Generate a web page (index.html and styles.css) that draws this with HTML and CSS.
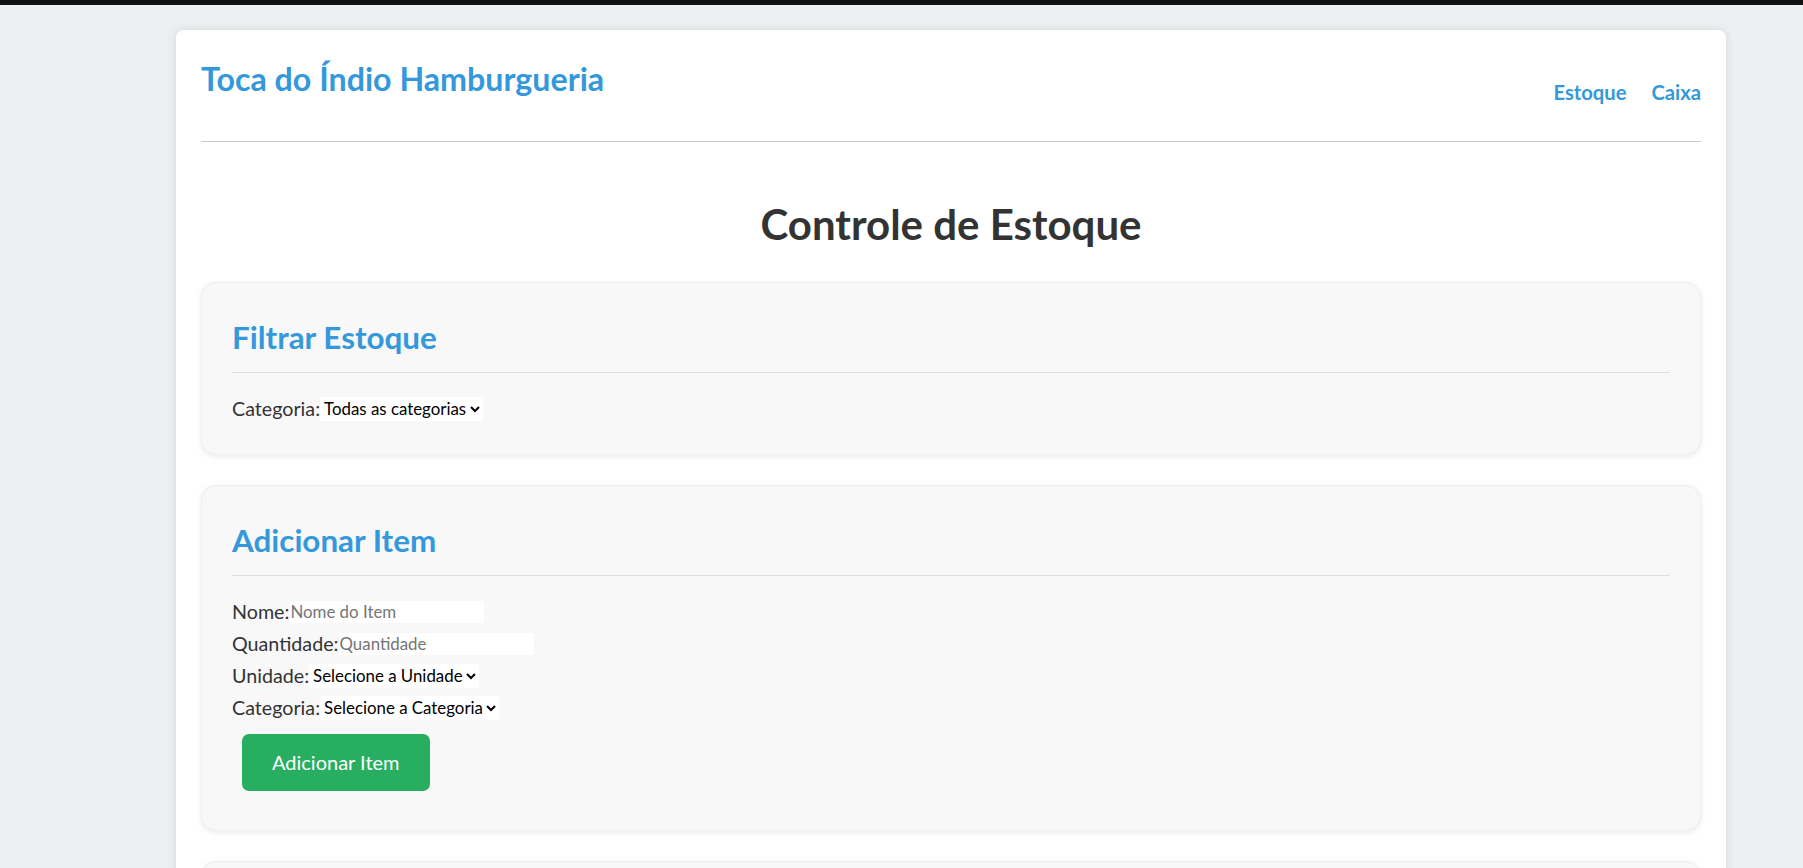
FILE: index.html
```html
<!DOCTYPE html>
<html lang="pt-BR">
<head>
<meta charset="utf-8">
<title>Toca do Índio Hamburgueria - Estoque</title>
<link rel="stylesheet" href="styles.css">
</head>
<body>
<div class="topbar"></div>
<div class="container">
  <header class="site-header">
    <h1 class="brand">Toca do Índio Hamburgueria</h1>
    <nav class="nav">
      <a href="#" class="nav-link">Estoque</a>
      <a href="#" class="nav-link">Caixa</a>
    </nav>
  </header>
  <main>
    <h2 class="page-title">Controle de Estoque</h2>
    <section class="panel">
      <h3 class="panel-title">Filtrar Estoque</h3>
      <div class="form-row">
        <label class="field-label" for="filtro">Categoria:</label><select id="filtro" class="field-select"><option>Todas as categorias</option></select>
      </div>
    </section>
    <section class="panel">
      <h3 class="panel-title">Adicionar Item</h3>
      <form class="item-form">
        <div class="form-row"><label class="field-label" for="nome">Nome:</label><input id="nome" class="field-input" type="text" placeholder="Nome do Item"></div>
        <div class="form-row"><label class="field-label" for="qtd">Quantidade:</label><input id="qtd" class="field-input" type="number" placeholder="Quantidade"></div>
        <div class="form-row"><label class="field-label" for="uni">Unidade:</label><select id="uni" class="field-select"><option>Selecione a Unidade</option></select></div>
        <div class="form-row"><label class="field-label" for="cat">Categoria:</label><select id="cat" class="field-select"><option>Selecione a Categoria</option></select></div>
        <button type="button" class="btn-add">Adicionar Item</button>
      </form>
    </section>
    <section class="panel">
      <h3 class="panel-title">Itens em Estoque</h3>
    </section>
  </main>
</div>
</body>
</html>
```
FILE: styles.css
```css
* { box-sizing: border-box; }
body {
  margin: 0;
  background: #ecf0f1;
  font-family: Lato, "Open Sans", sans-serif;
  color: #333;
}
.topbar { height: 5px; background: #111; }
.container {
  width: 1550px;
  margin: 25px 0 0 176px;
  padding: 0 25px 25px;
  background: #fff;
  border-radius: 8px;
  box-shadow: 0 0 10px rgba(0,0,0,0.1);
}
.site-header {
  display: flex;
  justify-content: space-between;
  align-items: flex-start;
  height: 112px;
  border-bottom: 1px solid #c8c8c8;
}
.brand {
  margin: 32.6px 0 0;
  font-size: 32.2px;
  line-height: 1;
  font-weight: 700;
  color: #3498db;
}
.nav { display: flex; gap: 25px; margin-top: 52.3px; }
.nav-link {
  font-size: 20.2px;
  line-height: 1;
  font-weight: 700;
  color: #3498db;
  text-decoration: none;
}
.page-title {
  margin: 61.4px 0 36.6px;
  text-align: center;
  font-size: 42px;
  line-height: 1;
  font-weight: 700;
  color: #333;
}
.panel {
  margin-bottom: 30px;
  padding: 30px 30px 29px;
  background: #f8f8f8;
  border: 1px solid #eee;
  border-radius: 15px;
  box-shadow: 0 2px 6px rgba(0,0,0,0.08);
}
.panel-title {
  margin: 9px 0 20px;
  padding-bottom: 18.6px;
  border-bottom: 1px solid #ddd;
  font-size: 31.4px;
  line-height: 1;
  font-weight: 700;
  color: #3498db;
}
.item-form { display: flex; flex-direction: column; align-items: flex-start; }
.form-row { display: flex; align-items: center; height: 32px; }
.field-label { font-size: 19.7px; color: #333; }
.field-input {
  width: 195px;
  height: 22px;
  padding: 0 1px;
  border: none;
  background: #fff;
  font-family: inherit;
  font-size: 16.85px;
}
.field-input::placeholder { color: #757575; }
.field-select {
  height: 24px;
  border: none;
  background: #fff;
  font-family: inherit;
  font-size: 16.85px;
  color: #000;
}
.btn-add {
  margin: 10px;
  padding: 15px 30px;
  border: none;
  border-radius: 7px;
  background: #27ae60;
  color: #fff;
  font-family: inherit;
  font-size: 20px;
  line-height: 27px;
}
```
